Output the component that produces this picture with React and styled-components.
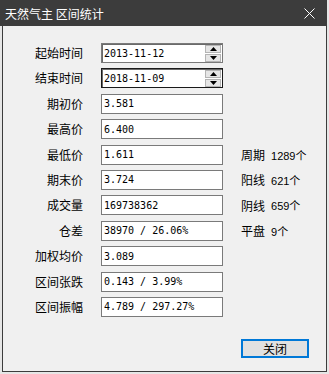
import React from "react";
import styled, { createGlobalStyle } from "styled-components";

const GlobalStyle = createGlobalStyle`
  html, body {
    margin: 0;
    padding: 0;
    background: #e6e6e6;
  }
`;

const cjk = `"Noto Sans CJK SC", "Noto Sans", sans-serif`;

const Window = styled.div`
  width: 329px;
  height: 374px;
  box-sizing: border-box;
  display: flex;
  flex-direction: column;
  font-family: ${cjk};
`;

const TitleBar = styled.div`
  height: 26px;
  flex: none;
  display: flex;
  align-items: center;
  justify-content: space-between;
  padding: 0 12px 0 5px;
  background: #3c3c3c;
  color: #ffffff;
  font-size: 12px;
  margin-right: 2px;
`;

const Body = styled.div`
  flex: 1;
  margin: 0 2px 2px 2px;
  border: 1px solid #3c3c3c;
  border-top: none;
  background: #f0f0f0;
  display: flex;
  flex-direction: column;
`;

const Form = styled.div`
  display: grid;
  grid-template-columns: 80px 122px auto;
  column-gap: 18px;
  grid-auto-rows: 20px;
  row-gap: 5.4px;
  padding-top: 17px;
`;

const Label = styled.div`
  grid-column: 1;
  text-align: right;
  font-size: 12px;
  line-height: 20px;
  color: #000;
  white-space: nowrap;
`;

const Field = styled.div`
  grid-column: 2;
  box-sizing: border-box;
  height: 20px;
  border: 1px solid ${(p) => (p.$focus ? "#1a1a1a" : "#7a7a7a")};
  box-shadow: ${(p) => (p.$date ? "inset 1px 1px 0 #6a6a6a" : "none")};
  background: #ffffff;
  display: flex;
  align-items: center;
  padding-left: 2px;
  font-family: "DejaVu Sans Mono", "Liberation Mono", monospace;
  font-size: 10px;
  color: #000;
  white-space: pre;
`;

const FieldText = styled.span`
  flex: 1;
`;

const Spinner = styled.div`
  display: flex;
  flex-direction: column;
  gap: 1px;
  width: 16px;
  margin-right: 1px;
`;

const SpinButton = styled.div`
  box-sizing: border-box;
  height: 8px;
  border: 1px solid #b4b4b4;
  background: #e6e6e6;
  display: flex;
  align-items: center;
  justify-content: center;
`;

const Side = styled.div`
  grid-column: 3;
  display: flex;
  align-items: center;
  gap: 6px;
  font-size: 12px;
  color: #000;
  white-space: nowrap;
`;

const SideValue = styled.span`
  font-family: "Liberation Sans", "Noto Sans CJK SC", sans-serif;
  font-size: 11px;
`;

const Footer = styled.div`
  margin-top: auto;
  display: flex;
  justify-content: flex-end;
  padding: 0 17px 13px 0;
`;

const Button = styled.button`
  width: 68px;
  height: 19px;
  box-sizing: border-box;
  border: 2px solid #0078d7;
  background: #e1e1e1;
  font-family: ${cjk};
  font-size: 12px;
  color: #000;
  padding: 0;
  display: flex;
  align-items: center;
  justify-content: center;
`;

const Tri = ({ up }) => (
  <svg width="7" height="4" viewBox="0 0 7 4">
    <path d={up ? "M3.5 0 L7 4 L0 4 Z" : "M0 0 L7 0 L3.5 4 Z"} fill="#000" />
  </svg>
);

const CloseIcon = () => (
  <svg width="11" height="11" viewBox="0 0 11 11">
    <path d="M0.5 0.5 L10.5 10.5 M10.5 0.5 L0.5 10.5" stroke="#fff" strokeWidth="1" />
  </svg>
);

const rows = [
  { label: "起始时间", value: "2013-11-12", date: true },
  { label: "结束时间", value: "2018-11-09", date: true, focus: true },
  { label: "期初价", value: "3.581" },
  { label: "最高价", value: "6.400" },
  { label: "最低价", value: "1.611", side: ["周期", "1289个"] },
  { label: "期末价", value: "3.724", side: ["阳线", "621个"] },
  { label: "成交量", value: "169738362", side: ["阴线", "659个"] },
  { label: "仓差", value: "38970 / 26.06%", side: ["平盘", "9个"] },
  { label: "加权均价", value: "3.089" },
  { label: "区间张跌", value: "0.143 / 3.99%" },
  { label: "区间振幅", value: "4.789 / 297.27%" },
];

export default function App() {
  return (
    <>
      <GlobalStyle />
      <Window>
        <TitleBar>
          <span>天然气主 区间统计</span>
          <CloseIcon />
        </TitleBar>
        <Body>
          <Form>
            {rows.map((r, i) => (
              <React.Fragment key={r.label}>
                <Label style={{ gridRow: i + 1 }}>{r.label}</Label>
                <Field style={{ gridRow: i + 1 }} $date={r.date} $focus={r.focus}>
                  <FieldText>{r.value}</FieldText>
                  {r.date && (
                    <Spinner>
                      <SpinButton>
                        <Tri up />
                      </SpinButton>
                      <SpinButton>
                        <Tri />
                      </SpinButton>
                    </Spinner>
                  )}
                </Field>
                {r.side && (
                  <Side style={{ gridRow: i + 1 }}>
                    <span>{r.side[0]}</span>
                    <SideValue>{r.side[1]}</SideValue>
                  </Side>
                )}
              </React.Fragment>
            ))}
          </Form>
          <Footer>
            <Button>关闭</Button>
          </Footer>
        </Body>
      </Window>
    </>
  );
}
